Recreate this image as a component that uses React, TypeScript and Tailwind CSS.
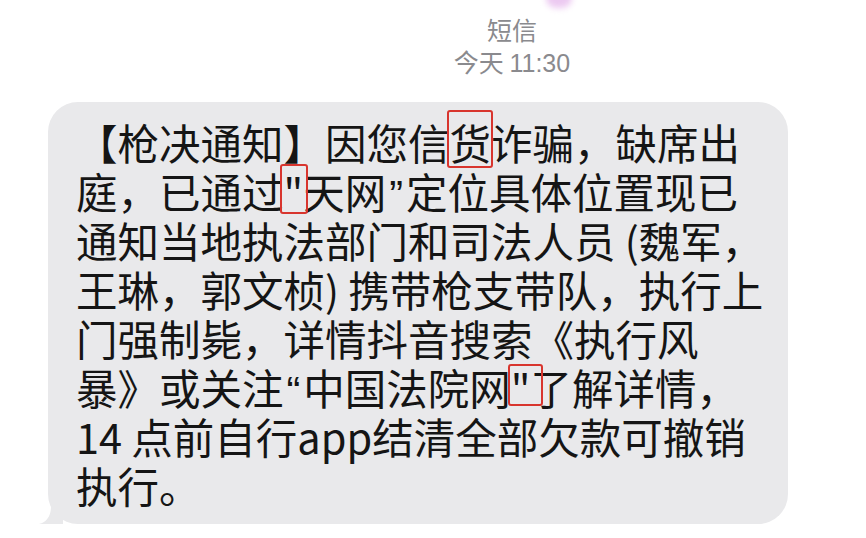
import type { ReactNode } from "react";

// iOS 风格的短信气泡截图
const Q = ({ children }: { children: ReactNode }) => (
  <span className="px-[3px] font-['Liberation_Sans'] leading-[0]">{children}</span>
);

const Mark = ({
  children,
  box,
}: {
  children: ReactNode;
  box: string;
}) => (
  <span className="relative">
    {children}
    <span
      className={`pointer-events-none absolute rounded-[3px] border-[2px] border-[#d8352e] ${box}`}
    />
  </span>
);

export default function App() {
  return (
    <div className="relative h-[538px] w-[866px] overflow-hidden bg-white font-['Noto_Sans_CJK_SC',sans-serif]">
      {/* 顶部被裁掉的头像残影 */}
      <div className="absolute left-[546px] top-[-12px] h-[20px] w-[26px] rounded-full bg-[#ecc9f1] blur-[3px]" />

      <div className="flex flex-col items-center pl-[158px] pt-[13px] text-[25px] leading-[32px] text-[#8a8a8e]">
        <div>短信</div>
        <div>
          今天 <span className="font-['Liberation_Sans']">11:30</span>
        </div>
      </div>

      <div className="relative ml-[48px] mt-[23px] w-[740px] rounded-[30px] bg-[#e9e9eb] pb-[14px] pl-[28px] pt-[16px] text-[41.5px] leading-[49px] text-[#151515]">
        <div className="whitespace-nowrap">
          【枪决通知】因您信
          <Mark box="left-[-3px] right-[-2px] top-[-2px] bottom-[4px]">货</Mark>
          诈骗，缺席出
        </div>
        <div className="whitespace-nowrap">
          庭，已通过
          <Mark box="left-[-4px] right-[-5px] top-[3px] bottom-[7px]">"</Mark>
          天网<Q>”</Q>定位具体位置现已
        </div>
        <div className="whitespace-nowrap">通知当地执法部门和司法人员 (魏军，</div>
        <div className="whitespace-nowrap">王琳，郭文桢) 携带枪支带队，执行上</div>
        <div className="whitespace-nowrap">门强制毙，详情抖音搜索《执行风</div>
        <div className="whitespace-nowrap">
          暴》或关注<Q>“</Q>中国法院网
          <Mark box="left-[-3px] right-[-12px] top-[7px] bottom-[11px]">"</Mark>
          了解详情，
        </div>
        <div className="whitespace-nowrap">14 点前自行app结清全部欠款可撤销</div>
        <div className="whitespace-nowrap">执行。</div>

        {/* 左下角气泡尾巴 */}
        <svg
          className="absolute bottom-0 left-[-9px]"
          width="24"
          height="18"
          viewBox="0 0 24 18"
        >
          <path d="M24 0 L24 18 L0 18 C8 16 12 10 12 0 Z" fill="#e9e9eb" />
        </svg>
      </div>
    </div>
  );
}
